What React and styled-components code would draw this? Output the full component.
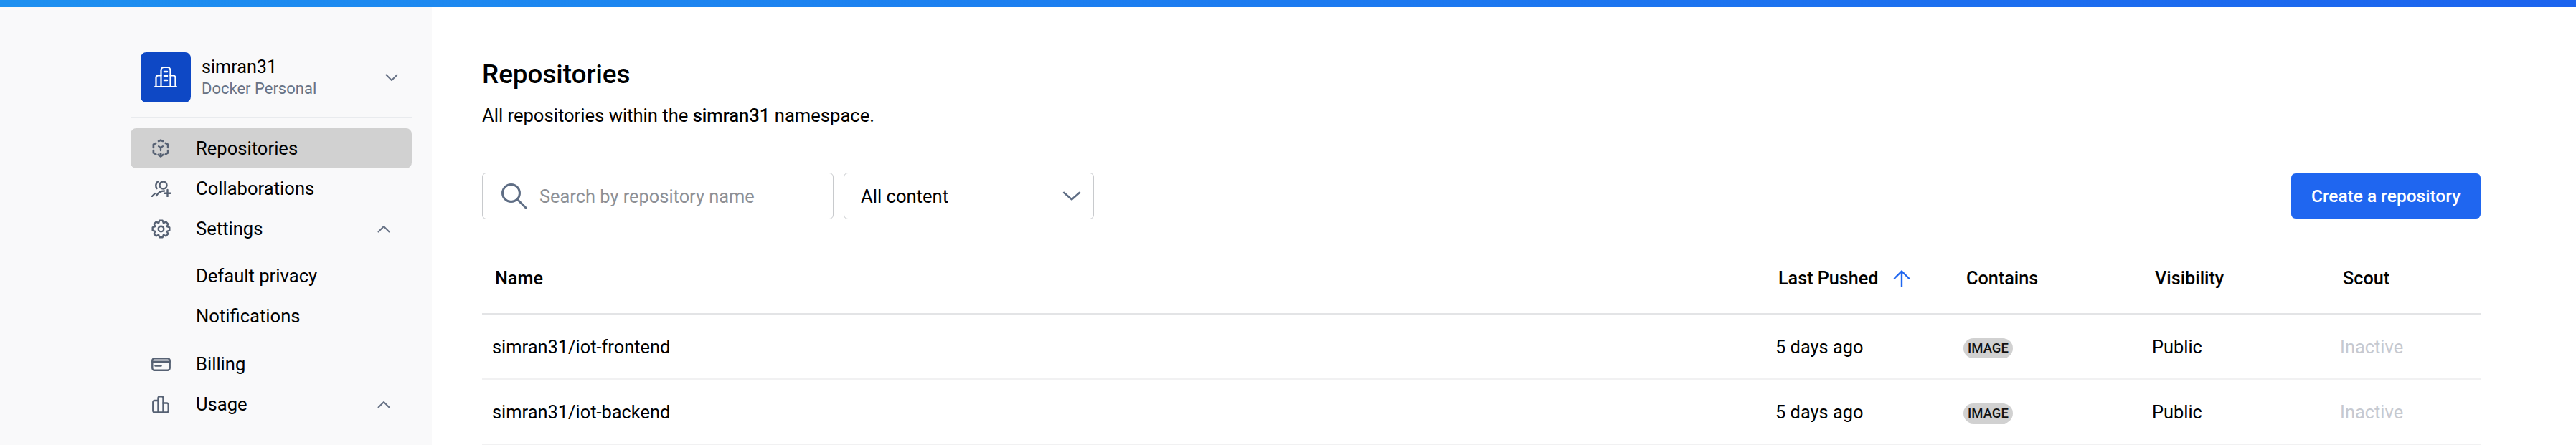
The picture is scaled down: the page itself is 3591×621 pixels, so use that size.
import React from "react";
import styled, { createGlobalStyle } from "styled-components";

const Global = createGlobalStyle`
  html, body { margin: 0; padding: 0; background: #fff; }
  body { font-family: Roboto, "Liberation Sans", sans-serif; color: #000; }
  * { box-sizing: border-box; }
`;

const Page = styled.div`
  width: 3591px;
  height: 621px;
  overflow: hidden;
  display: flex;
  flex-direction: column;
`;
const TopBar = styled.div`
  height: 10px;
  flex: none;
  background: linear-gradient(90deg, #1e90f0 0%, #1c7bf0 50%, #1c64ee 100%);
`;
const Body = styled.div`
  flex: 1;
  display: flex;
  min-height: 0;
`;
const Sidebar = styled.aside`
  width: 602px;
  flex: none;
  background: #f9f9fa;
  padding: 63px 28px 0 182px;
`;
const Account = styled.div`
  display: flex;
  align-items: center;
  height: 70px;
  padding: 0 19px 0 14px;
  gap: 15px;
`;
const Avatar = styled.div`
  width: 70px;
  height: 70px;
  border-radius: 8px;
  background: #0e48c5;
  color: #fff;
  display: flex;
  align-items: center;
  justify-content: center;
  flex: none;
`;
const AccountText = styled.div`
  flex: 1;
  display: flex;
  flex-direction: column;
  gap: 2px;
`;
const AccountName = styled.div`
  font-size: 25.2px;
  line-height: 30px;
`;
const AccountType = styled.div`
  font-size: 22px;
  line-height: 26px;
  color: #677285;
`;
const Divider = styled.div`
  height: 2px;
  background: #e9ebee;
  margin: 20px 0 14px;
`;
const NavList = styled.nav`
  display: flex;
  flex-direction: column;
`;
const NavItem = styled.div`
  height: 56px;
  flex: none;
  display: flex;
  align-items: center;
  padding: 0 30px 0 27px;
  border-radius: 8px;
  font-size: 25.6px;
  background: ${(p) => (p.$active ? "#d1d1d1" : "transparent")};
  margin-top: ${(p) => p.$gap || 0}px;
`;
const NavIcon = styled.span`
  width: 30px;
  height: 32px;
  flex: none;
  margin-right: 34px;
  color: #566173;
  display: flex;
  align-items: center;
  justify-content: center;
`;
const NavLabel = styled.span`
  flex: 1;
`;
const SubItem = styled(NavItem)`
  padding-left: 91px;
`;
const Main = styled.main`
  flex: 1;
  min-width: 0;
  padding: 0 133px 0 70px;
`;
const Title = styled.h1`
  margin: 0;
  padding-top: 72px;
  font-size: 36.8px;
  line-height: 44px;
  font-weight: 500;
`;
const Subtitle = styled.p`
  margin: 19px 0 0;
  font-size: 25.6px;
  line-height: 32px;
`;
const Strong = styled.strong`
  font-weight: 500;
`;
const Toolbar = styled.div`
  display: flex;
  align-items: center;
  gap: 14px;
  margin-top: 64px;
`;
const SearchBox = styled.div`
  width: 490px;
  height: 65px;
  border: 1.5px solid #c8cacd;
  border-radius: 6px;
  display: flex;
  align-items: center;
  padding-left: 26px;
  gap: 17px;
`;
const Placeholder = styled.span`
  font-size: 25.4px;
  color: #8e9095;
`;
const SelectBox = styled.div`
  width: 349px;
  height: 65px;
  border: 1.5px solid #c8cacd;
  border-radius: 6px;
  display: flex;
  align-items: center;
  justify-content: space-between;
  padding: 0 17px 0 23px;
  font-size: 25.6px;
`;
const CreateButton = styled.button`
  margin-left: auto;
  width: 264px;
  height: 63px;
  border: 0;
  border-radius: 6px;
  background: #1f66f0;
  color: #fff;
  font: 500 24.5px Roboto, sans-serif;
`;
const Grid = styled.div`
  display: grid;
  grid-template-columns: 1789px 262px 263px 262px 1fr;
  align-items: center;
`;
const HeadRow = styled(Grid)`
  height: 101px;
  margin-top: 32px;
  padding-left: 18px;
  padding-top: 2px;
  border-bottom: 2px solid #e3e4e6;
  font-size: 25.2px;
  font-weight: 500;
`;
const Row = styled(Grid)`
  height: 91px;
  padding-left: 14px;
  border-bottom: 2px solid #f1f1f2;
  font-size: 25.4px;
`;
const HeadCell = styled.div`
  display: flex;
  align-items: center;
  gap: 20px;
`;
const Muted = styled.div`
  color: #c6c9d0;
`;
const Chip = styled.span`
  display: inline-flex;
  align-items: center;
  justify-content: center;
  width: 69px;
  height: 28px;
  border-radius: 14px;
  background: #d1d1d1;
  font-size: 18.5px;
  font-weight: 500;
  color: #111;
`;

const Svg = ({ w, h, sw = 2, children }) => (
  <svg width={w} height={h} viewBox={`0 0 ${w} ${h}`} fill="none" stroke="currentColor" strokeWidth={sw} strokeLinecap="round" strokeLinejoin="round">
    {children}
  </svg>
);

const BuildingIcon = () => (
  <Svg w={32} h={30} sw={2.2}>
    <path d="M1 28h30" />
    <path d="M9.500 27.500V5a4 4 0 0 1 4-4h5a4 4 0 0 1 4 4v22.500" />
    <path d="M9.500 12.500H5.500a3 3 0 0 0-3 3v12M22.500 12.500h4a3 3 0 0 1 3 3v12" />
    <path d="M14 7h4M14 13h4M14 19h4" strokeWidth="2.6" />
  </Svg>
);
const RepoIcon = () => (
  <svg width="24" height="27" viewBox="0 0 28 32" fill="none" stroke="currentColor" strokeWidth="3.2" strokeLinecap="round" strokeLinejoin="round">
    <path d="M10.500 3.500 14 2l3.500 1.500" />
    <path d="M22 7l4 2.200v5" />
    <path d="M6 7 2 9.200v5" />
    <path d="M2 19v4l4 2.300" />
    <path d="M26 19v4l-4 2.300" />
    <path d="M10 26l4 3 4-3" />
    <path d="M14 27v-3" />
    <path d="M10.500 12l3.500 2.500 3.500-2.500M14 14.500V19" strokeWidth="2.8" />
  </svg>
);
const CollabIcon = () => (
  <Svg w={27} h={23} sw={2.4}>
    <circle cx="16.500" cy="6.500" r="5" />
    <path d="M9 1.500a7 7 0 0 0-1.500 9.500" />
    <path d="M1 22l4-4" />
    <path d="M7 21c2.500-4 6-6.500 11-6.500" />
    <path d="M22.500 13v9.500M18 17.700h8.500" />
  </Svg>
);

const gearPath = (() => {
  const cx = 13.5;
  const cy = 13.5;
  const outer = 12;
  const inner = 9;
  const teeth = 8;
  const pts = [];
  for (let i = 0; i < teeth; i += 1) {
    const a = (i * 2 * Math.PI) / teeth - Math.PI / 2;
    const step = (2 * Math.PI) / teeth;
    [[inner, -0.5], [outer, -0.22], [outer, 0.22], [inner, 0.5]].forEach(([r, t]) => {
      const ang = a + t * step;
      pts.push(`${(cx + r * Math.cos(ang)).toFixed(2)} ${(cy + r * Math.sin(ang)).toFixed(2)}`);
    });
  }
  return `M${pts.join("L")}Z`;
})();
const GearIcon = () => (
  <Svg w={27} h={27} sw={2.4}>
    <circle cx="13.5" cy="13.5" r="3.8" />
    <path d={gearPath} />
  </Svg>
);
const CardIcon = () => (
  <Svg w={27} h={19} sw={2.4}>
    <rect x="1.300" y="1.300" width="24.400" height="16.400" rx="3" />
    <path d="M1.300 5.800h24.400" />
    <path d="M5.500 11.500h8" />
  </Svg>
);
const BarsIcon = () => (
  <Svg w={24} h={25} sw={2.4}>
    <path d="M8.500 23.500V3.500a2.200 2.200 0 0 1 2.200-2.200h2.600a2.200 2.200 0 0 1 2.200 2.200v20" />
    <path d="M8.500 7H3.500a2.200 2.200 0 0 0-2.200 2.200v12.100a2.200 2.200 0 0 0 2.200 2.200h17a2.200 2.200 0 0 0 2.200-2.200v-8.600a2.200 2.200 0 0 0-2.200-2.200h-5" />
  </Svg>
);
const Chevron = ({ up, w = 18, h = 11, color = "#677285" }) => (
  <svg width={w} height={h} viewBox="0 0 18 11" fill="none" stroke={color} strokeWidth="2" strokeLinecap="round" strokeLinejoin="round" preserveAspectRatio="none">
    <path d={up ? "M1.500 9.500 9 2l7.500 7.500" : "M1.500 1.500 9 9l7.500-7.500"} />
  </svg>
);
const SearchIcon = () => (
  <svg width="36" height="36" viewBox="0 0 36 36" fill="none" stroke="#5f6e85" strokeWidth="3" strokeLinecap="round">
    <circle cx="13.500" cy="13.500" r="12" />
    <path d="M22.500 22.500 34 34" />
  </svg>
);
const ArrowUp = () => (
  <svg width="24" height="24" viewBox="0 0 24 24" fill="none" stroke="#1f66f0" strokeWidth="2.4" strokeLinecap="round" strokeLinejoin="round">
    <path d="M12 23V1.500M2 11.500 12 1.500l10 10" />
  </svg>
);

const repos = ["simran31/iot-frontend", "simran31/iot-backend"];

export default function App() {
  return (
    <Page>
      <Global />
      <TopBar />
      <Body>
        <Sidebar>
          <Account>
            <Avatar><BuildingIcon /></Avatar>
            <AccountText>
              <AccountName>simran31</AccountName>
              <AccountType>Docker Personal</AccountType>
            </AccountText>
            <Chevron />
          </Account>
          <Divider />
          <NavList>
            <NavItem $active><NavIcon><RepoIcon /></NavIcon><NavLabel>Repositories</NavLabel></NavItem>
            <NavItem><NavIcon><CollabIcon /></NavIcon><NavLabel>Collaborations</NavLabel></NavItem>
            <NavItem><NavIcon><GearIcon /></NavIcon><NavLabel>Settings</NavLabel><Chevron up /></NavItem>
            <SubItem $gap={10}>Default privacy</SubItem>
            <SubItem>Notifications</SubItem>
            <NavItem $gap={11}><NavIcon><CardIcon /></NavIcon><NavLabel>Billing</NavLabel></NavItem>
            <NavItem><NavIcon><BarsIcon /></NavIcon><NavLabel>Usage</NavLabel><Chevron up /></NavItem>
            <SubItem $gap={12}>Pulls</SubItem>
          </NavList>
        </Sidebar>
        <Main>
          <Title>Repositories</Title>
          <Subtitle>All repositories within the <Strong>simran31</Strong> namespace.</Subtitle>
          <Toolbar>
            <SearchBox><SearchIcon /><Placeholder>Search by repository name</Placeholder></SearchBox>
            <SelectBox>All content<Chevron w={26} h={14} color="#5f6e85" /></SelectBox>
            <CreateButton>Create a repository</CreateButton>
          </Toolbar>
          <HeadRow>
            <HeadCell>Name</HeadCell>
            <HeadCell>Last Pushed <ArrowUp /></HeadCell>
            <HeadCell>Contains</HeadCell>
            <HeadCell>Visibility</HeadCell>
            <HeadCell>Scout</HeadCell>
          </HeadRow>
          {repos.map((r) => (
            <Row key={r}>
              <div>{r}</div>
              <div>5 days ago</div>
              <div><Chip>IMAGE</Chip></div>
              <div>Public</div>
              <Muted>Inactive</Muted>
            </Row>
          ))}
        </Main>
      </Body>
    </Page>
  );
}
